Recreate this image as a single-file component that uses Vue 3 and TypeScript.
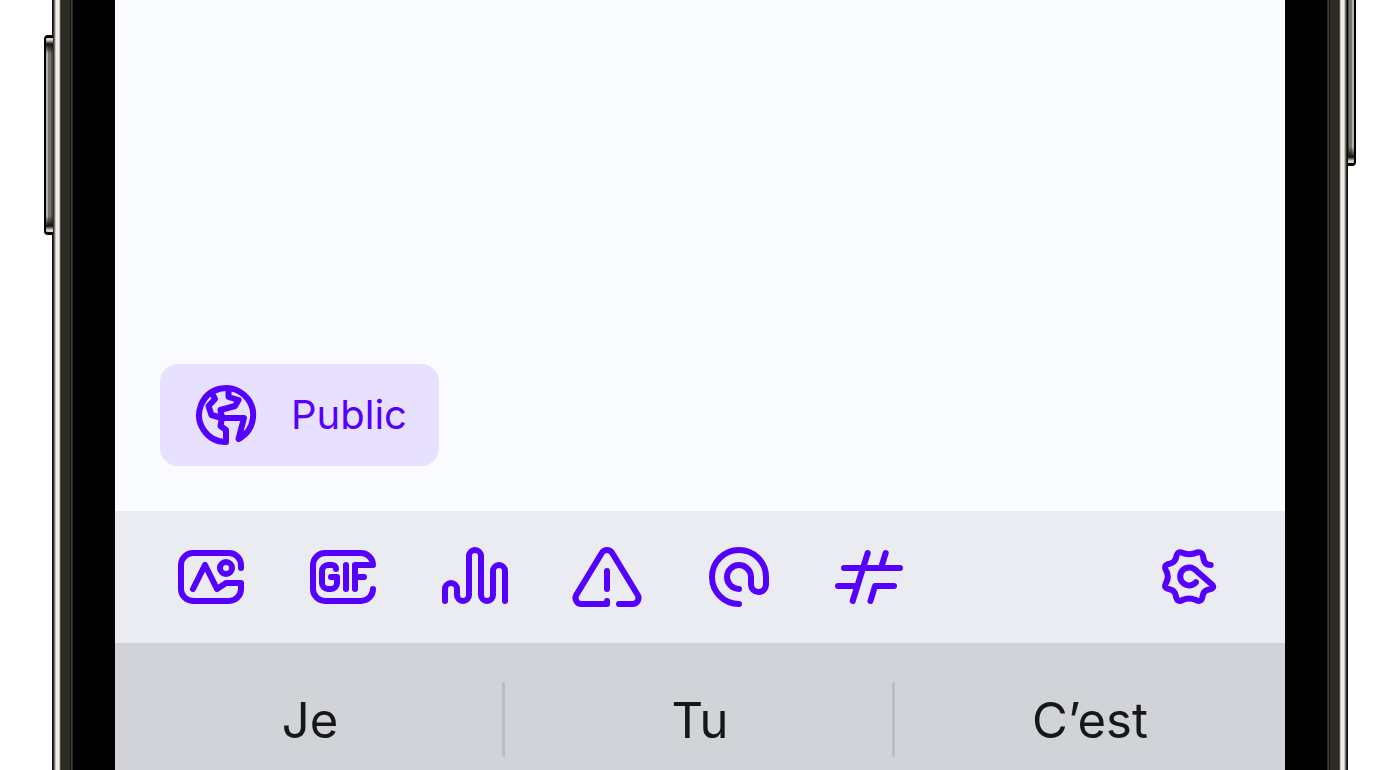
<script setup lang="ts">
interface Tool {
  id: string
  label: string
  paths: string[]
}

const tools: Tool[] = [
  {
    id: 'image',
    label: 'Image',
    paths: [
      'M66 27V24A12 12 0 0 0 54 12H18A12 12 0 0 0 6 24V48A12 12 0 0 0 18 60H54A12 12 0 0 0 66 48V42H51L42 48L30 24L18 48',
      'M45 27A6 6 0 1 0 57 27A6 6 0 1 0 45 27',
    ],
  },
  {
    id: 'gif',
    label: 'GIF',
    paths: [
      'M48 48V24H66A12 12 0 0 0 54 12H18A12 12 0 0 0 6 24V48A12 12 0 0 0 18 60H54A12 12 0 0 0 66 48',
      'M48 36H57M39 24V48',
      'M29 28C29 25 27 24 25 24H21A6 6 0 0 0 15 30V42A6 6 0 0 0 21 48H24A6 6 0 0 0 30 42V36H24',
    ],
  },
  {
    id: 'poll',
    label: 'Poll',
    paths: [
      'M6 60V48A6 6 0 0 1 18 48V54A6 6 0 0 0 30 54V15A6 6 0 0 1 42 15V54A6 6 0 0 0 54 54V30A6 6 0 0 1 66 30V60',
    ],
  },
  {
    id: 'warning',
    label: 'Content warning',
    paths: [
      'M36 60V63H10.5A6 6 0 0 1 5.3 54L30.8 12A6 6 0 0 1 41.2 12L66.7 54A6 6 0 0 1 61.5 63H48',
      'M36 30V48',
    ],
  },
  {
    id: 'mention',
    label: 'Mention',
    paths: ['M36 63A27 27 0 1 1 63 36V43.5A7.5 7.5 0 0 1 48 43.5V36A12 12 0 1 0 36 48'],
  },
  {
    id: 'hashtag',
    label: 'Hashtag',
    paths: ['M9 27H65M32.7 12L17.7 60M50.7 12L46 27M3 45H21M59 45H40L35.5 60'],
  },
]

const settings: Tool = {
  id: 'settings',
  label: 'Settings',
  paths: [
    'M57.7 24C53 24 51 21 50.5 18C50 12 47.5 10.5 44 11.5C39 13.8 33.5 13.8 28.5 11.5C25 10.5 23.5 13 23 17C22 20.5 20 22 16.5 22.7C12.5 23.2 11.2 25.5 12.8 29C15.3 33 15.3 38 12.8 42.5C11 46 12.8 48 16.5 48.3C20.5 49 22.5 51.5 23 55.5C24 60 26.5 61 29.5 59C34 56.8 38 56.8 43 59C47 61 49 59.5 49.5 55.5C50 51.5 52 49 56 48.5C60 48 61 46 59.5 44L43 29.5A9 9 0 1 0 43 41.3',
  ],
}

const suggestions: string[] = ['Je', 'Tu', 'C’est']
</script>

<template>
  <div class="stage">
    <div class="phone">
      <span class="side-key side-key-left"></span>
      <span class="side-key side-key-right"></span>
      <div class="edge"></div>
      <main class="screen">
        <section class="composer">
          <button class="visibility" type="button">
            <svg class="icon" viewBox="0 0 72 72" aria-hidden="true">
              <path d="M36 63A27 27 0 1 1 48.5 60L54 39H32L30.5 47L36 51Z" />
              <path d="M22 14L25 20L18.5 27L21.5 36L32 39L30.5 31L45 27L48.5 21L38.5 18V10" />
            </svg>
            <span>Public</span>
          </button>
        </section>

        <nav class="toolbar" aria-label="Post tools">
          <button v-for="tool in tools" :key="tool.id" class="tool" type="button" :aria-label="tool.label">
            <svg class="icon" viewBox="0 0 72 72" aria-hidden="true">
              <path v-for="d in tool.paths" :key="d" :d="d" />
            </svg>
          </button>
          <button class="tool tool-end" type="button" :aria-label="settings.label">
            <svg class="icon" viewBox="0 0 72 72" aria-hidden="true">
              <path v-for="d in settings.paths" :key="d" :d="d" />
            </svg>
          </button>
        </nav>

        <div class="suggestions">
          <button v-for="word in suggestions" :key="word" class="suggestion" type="button">{{ word }}</button>
        </div>
      </main>
      <div class="edge edge-right"></div>
    </div>
  </div>
</template>

<style>
body {
  margin: 0;
  background: #fff;
}
</style>

<style scoped>
.stage {
  box-sizing: border-box;
  min-height: 100vh;
  padding: 0 52px;
  display: flex;
  background: #fff;
  font-family: Inter, "Liberation Sans", sans-serif;
}

.phone {
  position: relative;
  flex: 1;
  display: flex;
}

.edge {
  flex: none;
  width: 63px;
  background: linear-gradient(
    90deg,
    #0c0c0b 0 1px,
    #33322e 1px 2px,
    #77746c 2px 3px,
    #c9c6bd 3px 4px,
    #f3f0e9 4px 7px,
    #c5c2b9 7px 8px,
    #504e48 8px 9px,
    #2a2924 9px 18px,
    #15140f 18px 19px,
    #3d3d3b 19px 20px,
    #2b2b2b 20px 21px,
    #000 21px
  );
}

.edge-right {
  transform: scaleX(-1);
}

.side-key {
  position: absolute;
  box-sizing: border-box;
  width: 9px;
  border: 1px solid #000;
  border-width: 3px 0 3px 2px;
  border-radius: 4px 0 0 4px;
  background:
    linear-gradient(#d8d5ce 0 2px, #111 6px, transparent 16px calc(100% - 16px), #111 calc(100% - 6px), #d8d5ce calc(100% - 2px)),
    linear-gradient(90deg, #b5b2ab 0 2px, #77756f 2px 5px, #4b4a46 5px);
}

.side-key-left {
  top: 35px;
  left: -8px;
  height: 200px;
}

.side-key-right {
  top: -34px;
  right: -8px;
  height: 200px;
  transform: scaleX(-1);
}

.screen {
  flex: 1;
  min-width: 0;
  display: flex;
  flex-direction: column;
  background: #fafbff;
}

button {
  margin: 0;
  padding: 0;
  border: 0;
  background: none;
  font: inherit;
  cursor: pointer;
}

.icon {
  display: block;
  flex: none;
  width: 72px;
  height: 72px;
  fill: none;
  stroke: #5500ff;
  stroke-width: 6;
  stroke-linecap: round;
  stroke-linejoin: round;
}

.composer {
  flex: 1;
  display: flex;
  align-items: flex-end;
  padding: 45px;
}

.visibility {
  display: flex;
  align-items: center;
  gap: 29px;
  padding: 15px 32px 15px 30px;
  border-radius: 18px;
  background: #e7e0ff;
  color: #5500ff;
  font-size: 40px;
  line-height: 48px;
}

.toolbar {
  display: flex;
  gap: 60px;
  padding: 30px 60px;
  background: #ebecf2;
}

.tool-end {
  margin-left: auto;
}

.suggestions {
  display: grid;
  grid-template-columns: repeat(3, 1fr);
  padding: 39px 0 13px;
  background: #d2d3d8;
}

.suggestion {
  position: relative;
  height: 75px;
  color: #161718;
  font-size: 49px;
  line-height: 77px;
  text-align: center;
}

.suggestion:not(:last-child)::after {
  content: "";
  position: absolute;
  top: 0;
  right: 0;
  width: 3px;
  height: 100%;
  border-radius: 2px;
  background: #bcbdc2;
}
</style>
